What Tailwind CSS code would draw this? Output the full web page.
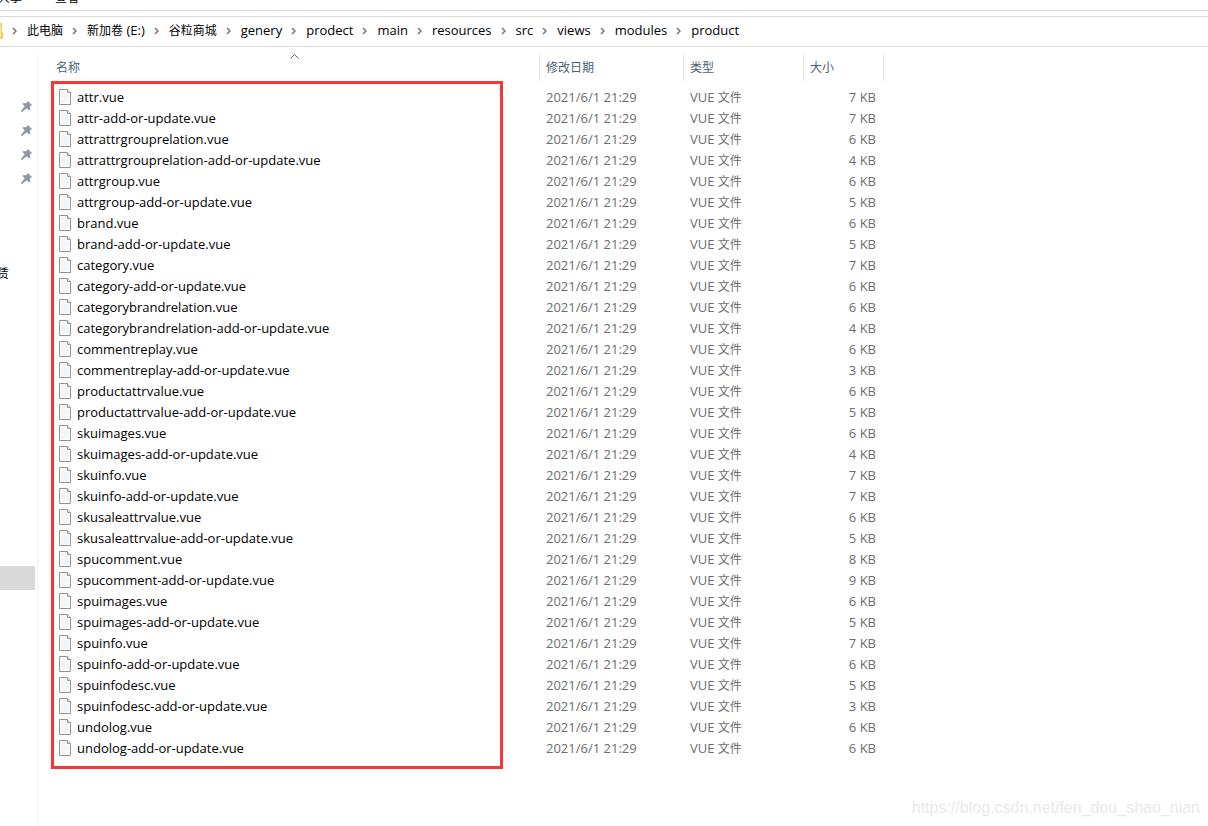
<!DOCTYPE html>
<html lang="zh-CN">
<head>
<meta charset="utf-8">
<title>product</title>
<script src="https://cdn.jsdelivr.net/npm/@tailwindcss/browser@4"></script>
</head>
<body class="flex min-h-screen flex-col overflow-hidden bg-white font-['Open_Sans','Noto_Sans_CJK_SC',sans-serif] text-[13px] text-black">
<svg class="hidden" aria-hidden="true">
  <symbol id="chevron" viewBox="0 0 5 8"><path d="M1 1l3 3-3 3" fill="none" stroke="#777" stroke-width="1.5"/></symbol>
  <symbol id="file" viewBox="0 0 12 16">
    <path d="M.5.5h8l3 3v12H.5z" fill="#fff" stroke="#929292"/>
    <path d="M2 2h5v3h3v9H2z" fill="#f3f5f6"/>
    <path d="M8.500.5v3h3" fill="#eee" stroke="#929292"/>
  </symbol>
  <symbol id="pin" viewBox="0 0 11 11"><path d="M7 0l4 4-1.300.8-.9 1.500.2 2.200-1 1L5.700 7.200 1.500 10.700 0 11l.3-1.500L3.800 5.300 1.500 3l1-1 2.200.2 1.500-.9z" fill="#8e99a3"/></symbol>
</svg>

<nav class="h-[10px] overflow-hidden text-xs" aria-label="选项卡">
  <div class="-mt-2 -ml-[2px] flex h-3 items-end gap-[33px] leading-3">
    <button>共享</button><button>查看</button>
  </div>
</nav>
<header class="border-t border-[#dadada] pt-[5px]">
  <nav aria-label="路径" class="border-y border-[#d9d9d9]">
    <ol id="path" class="flex h-[29px] items-center pb-[2px] whitespace-nowrap">
      <li class="flex items-center">
        <svg class="h-4 w-[3px]" viewBox="0 0 3 16" aria-hidden="true"><path d="M0 0h2v9h1v7H0z" fill="#f5cf63"/><path d="M0 2h1v12H0z" fill="#ffe79a"/></svg>
      </li>
    </ol>
  </nav>
</header>

<div class="flex grow pt-[7px]">
  <aside class="flex w-[38px] shrink-0 flex-col overflow-hidden border-r border-[#f3f3f3] pt-10 text-xs">
    <ul id="pins"></ul>
    <div class="mt-[72px] -ml-[3px] h-6 leading-6">赁</div>
    <div class="mt-[280px] mr-[2px] h-6 bg-[#d9d9d9]"></div>
  </aside>

  <main class="relative grow">
    <table class="w-[846px] table-fixed border-separate border-spacing-0">
      <colgroup><col><col class="w-[144px]"><col class="w-[120px]"><col class="w-[80px]"></colgroup>
      <thead>
        <tr class="h-[27px] text-left text-xs text-[#4c607a]">
          <th class="relative border-r border-[#e5e5e5] p-0 pl-[18px] font-normal"><button>名称</button>
            <svg class="absolute top-0 left-[252px] h-[5px] w-[9px]" viewBox="0 0 9 5" aria-hidden="true"><path d="M.5 4.500l4-4 4 4" fill="none" stroke="#666"/></svg>
          </th>
          <th class="border-r border-[#e5e5e5] p-0 pl-[6px] font-normal"><button>修改日期</button></th>
          <th class="border-r border-[#e5e5e5] p-0 pl-[6px] font-normal"><button>类型</button></th>
          <th class="border-r border-[#e5e5e5] p-0 pl-[6px] font-normal"><button>大小</button></th>
        </tr>
        <tr class="h-[5px]"></tr>
      </thead>
      <tbody id="files"></tbody>
    </table>
    <div class="pointer-events-none absolute top-[27px] left-[13px] h-[688px] w-[452px] border-[3px] border-[#fa3534]"></div>
    <p class="absolute right-2 bottom-2 font-['Liberation_Sans',sans-serif] text-base leading-5 text-[#e9e9e9]">https://blog.csdn.net/fen_dou_shao_nian</p>
  </main>
</div>

<script>
const crumbs = ['此电脑', '新加卷 (E:)', '谷粒商城', 'genery', 'prodect', 'main', 'resources', 'src', 'views', 'modules', 'product'];
const files = [['attr', 7, 7], ['attrattrgrouprelation', 6, 4], ['attrgroup', 6, 5], ['brand', 6, 5], ['category', 7, 6],
  ['categorybrandrelation', 6, 4], ['commentreplay', 6, 3], ['productattrvalue', 6, 5], ['skuimages', 6, 4], ['skuinfo', 7, 7],
  ['skusaleattrvalue', 6, 5], ['spucomment', 8, 9], ['spuimages', 6, 5], ['spuinfo', 7, 6], ['spuinfodesc', 5, 3], ['undolog', 6, 6]];
const cjk = t => t.replace(/[\u4e00-\u9fff]+/g, '<span class="text-xs">$&</span>');

document.getElementById('path').insertAdjacentHTML('beforeend', crumbs.map(c =>
  `<li class="flex items-center"><svg class="mr-[10px] ml-[9px] h-2 w-[5px]" aria-hidden="true"><use href="#chevron"/></svg><a href="#">${cjk(c)}</a></li>`).join(''));

document.getElementById('pins').innerHTML = Array(4).fill(
  '<li class="flex h-6 items-center pl-[21px]"><svg class="h-[11px] w-[11px]" aria-hidden="true"><use href="#pin"/></svg></li>').join('');

const row = (name, size) => `<tr class="h-[21px] leading-5 text-[#6d6d6d]">
  <td class="p-0 pl-[21px] text-black"><a href="#" class="flex items-center gap-[6px]"><svg class="h-4 w-3" aria-hidden="true"><use href="#file"/></svg>${name}</a></td>
  <td class="p-0 pl-[6px]">2021/6/1 21:29</td>
  <td class="p-0 pl-[6px]">VUE ${cjk('文件')}</td>
  <td class="p-0 pr-2 text-right">${size} KB</td></tr>`;
document.getElementById('files').innerHTML = files.map(([n, a, b]) => row(n + '.vue', a) + row(n + '-add-or-update.vue', b)).join('');
</script>
</body>
</html>
